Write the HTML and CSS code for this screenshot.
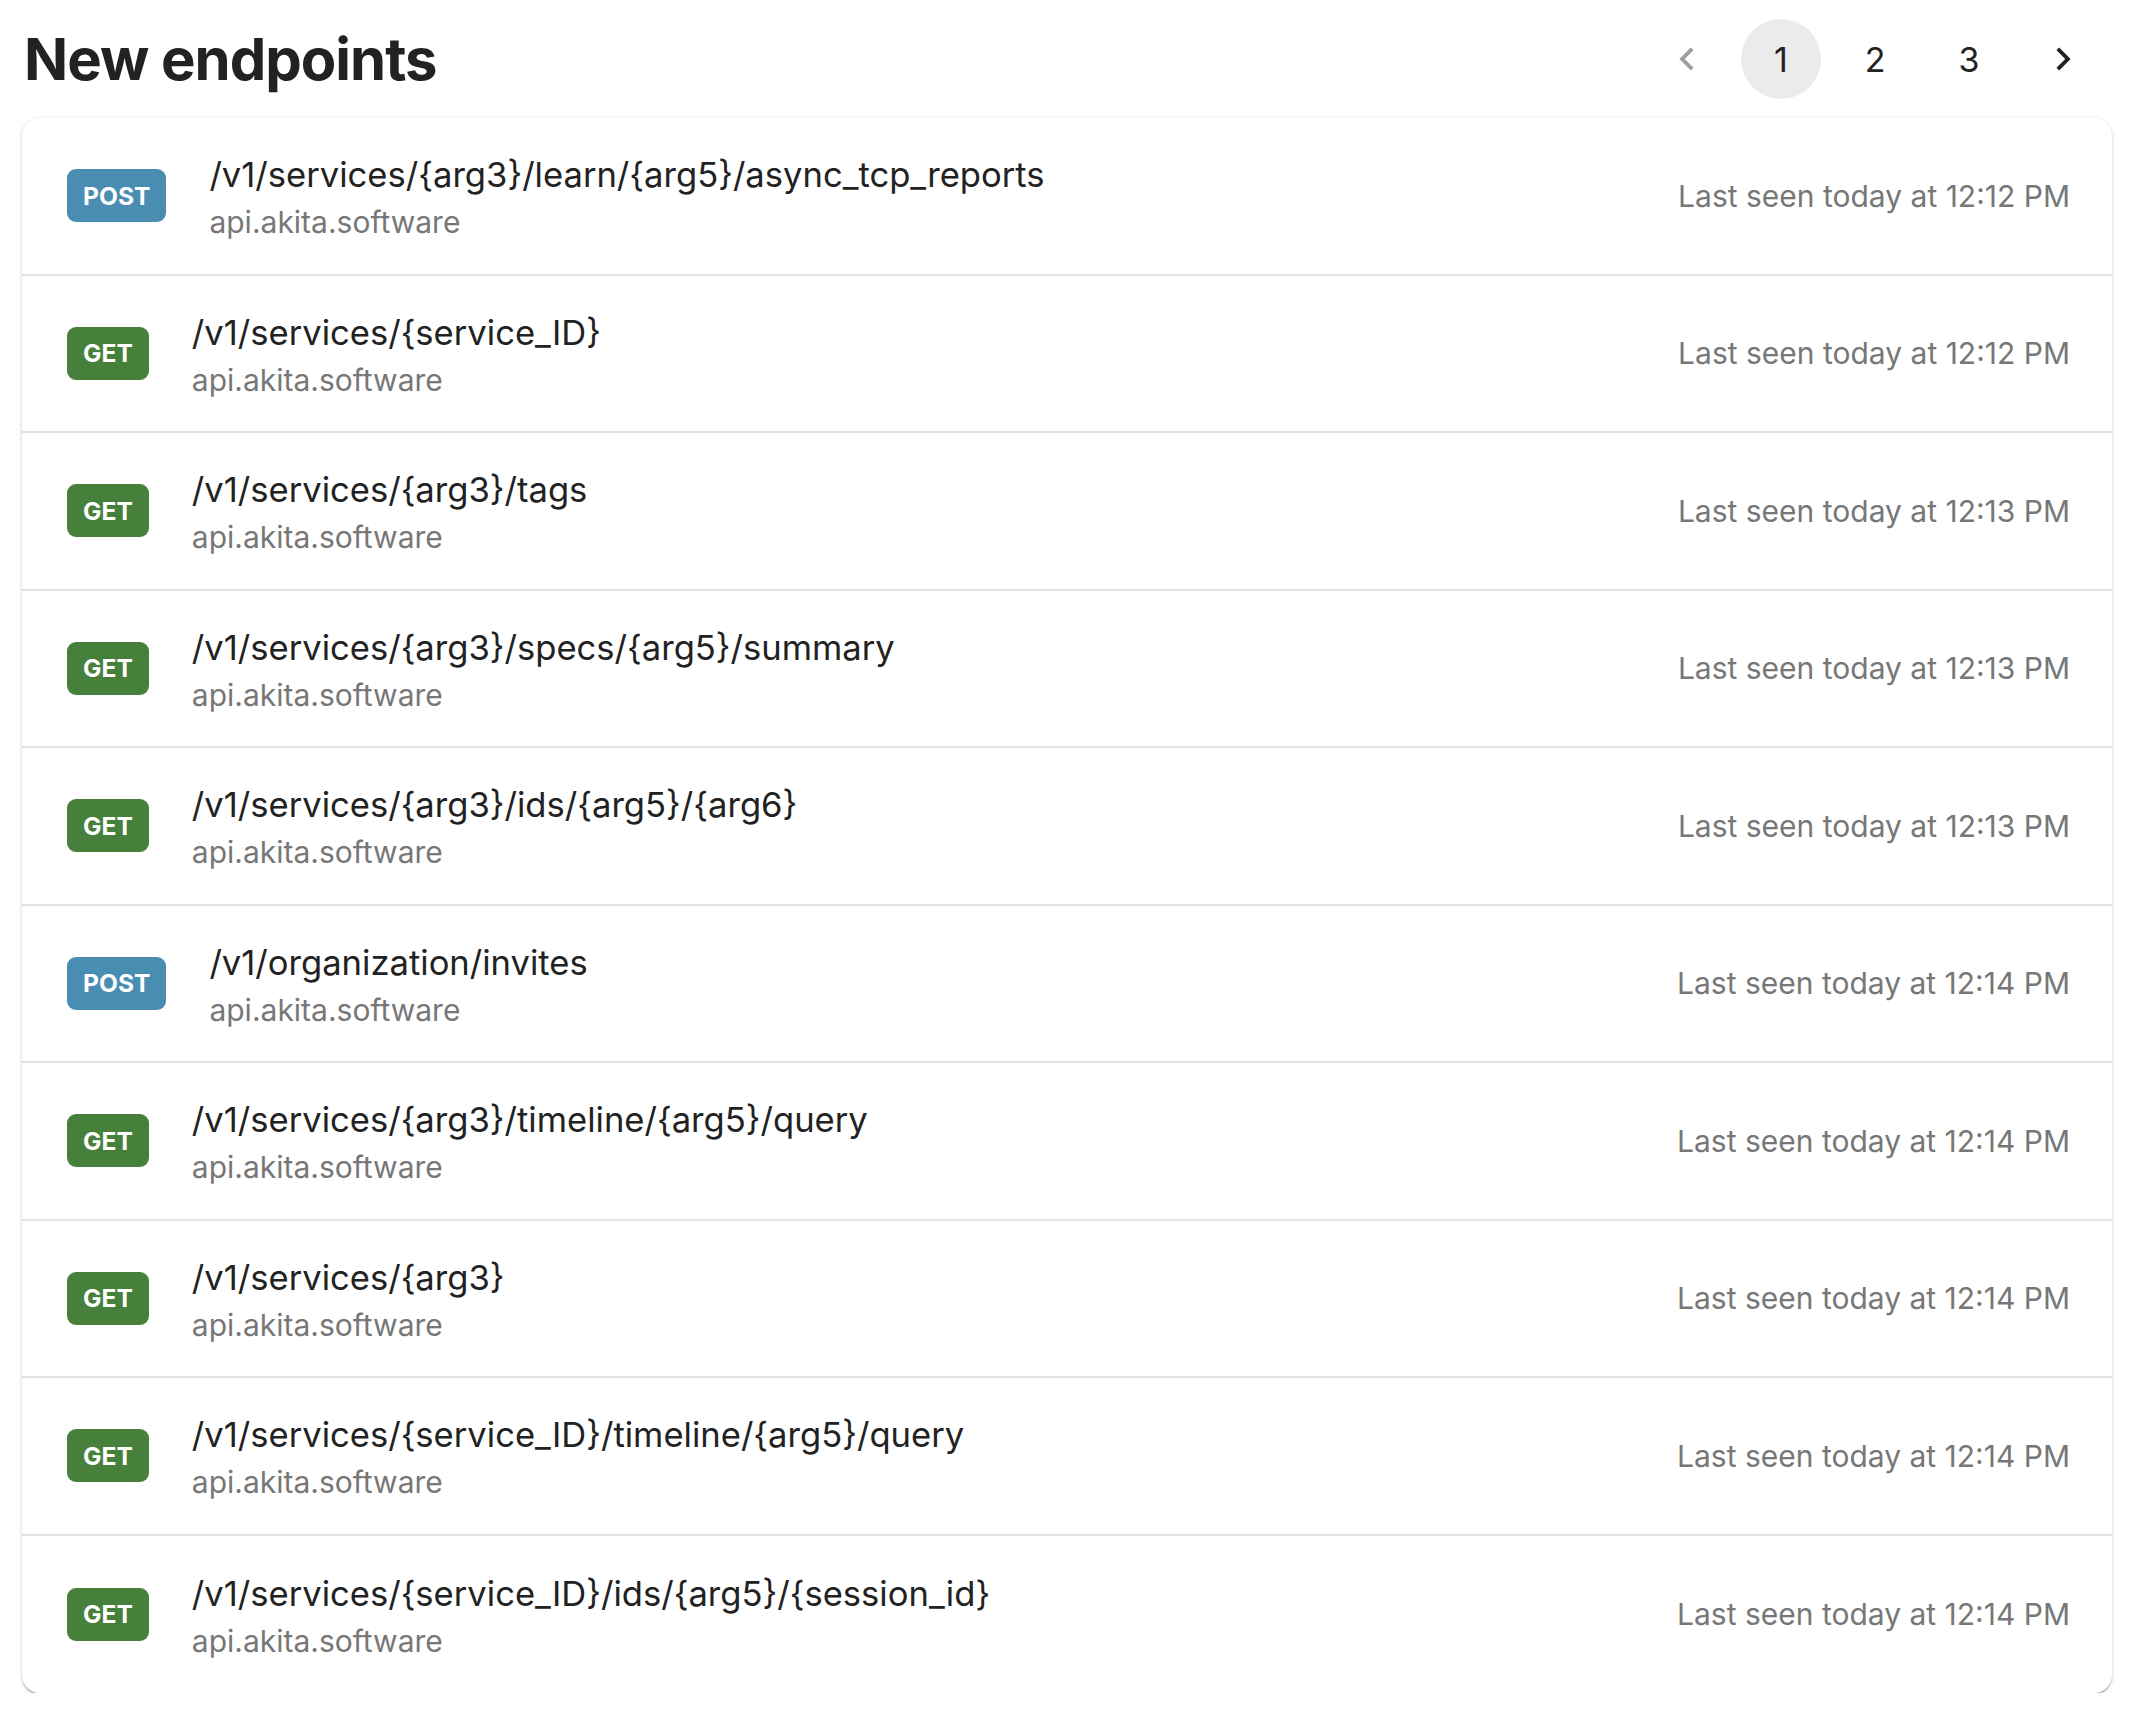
FILE: index.html
```html
<!DOCTYPE html>
<html lang="en">
  <head>
    <meta charset="UTF-8" />
    <meta name="viewport" content="width=device-width, initial-scale=1.0" />
    <title>New endpoints</title>

    <link rel="stylesheet" href="styles.css">
  </head>
  <body>
    <header class="top">
      <h1 class="title">New endpoints</h1>
      <nav class="pager">
        <button class="page-arrow" disabled>
          <svg viewBox="0 0 24 24"><path d="M15.41 7.41 14 6l-6 6 6 6 1.41-1.41L10.83 12z" /></svg>
        </button>
        <button class="page current">1</button>
        <button class="page">2</button>
        <button class="page">3</button>
        <button class="page-arrow">
          <svg viewBox="0 0 24 24"><path d="M10 6 8.59 7.41 13.17 12l-4.58 4.59L10 18l6-6z" /></svg>
        </button>
      </nav>
    </header>

    <section class="card">
      <div class="row">
        <span class="method post">POST</span>
        <div class="info">
          <div class="path">/v1/services/{arg3}/learn/{arg5}/async_tcp_reports</div>
          <div class="host">api.akita.software</div>
        </div>
        <div class="seen">Last seen today at 12:12 PM</div>
      </div>
      <div class="row">
        <span class="method get">GET</span>
        <div class="info">
          <div class="path">/v1/services/{service_ID}</div>
          <div class="host">api.akita.software</div>
        </div>
        <div class="seen">Last seen today at 12:12 PM</div>
      </div>
      <div class="row">
        <span class="method get">GET</span>
        <div class="info">
          <div class="path">/v1/services/{arg3}/tags</div>
          <div class="host">api.akita.software</div>
        </div>
        <div class="seen">Last seen today at 12:13 PM</div>
      </div>
      <div class="row">
        <span class="method get">GET</span>
        <div class="info">
          <div class="path">/v1/services/{arg3}/specs/{arg5}/summary</div>
          <div class="host">api.akita.software</div>
        </div>
        <div class="seen">Last seen today at 12:13 PM</div>
      </div>
      <div class="row">
        <span class="method get">GET</span>
        <div class="info">
          <div class="path">/v1/services/{arg3}/ids/{arg5}/{arg6}</div>
          <div class="host">api.akita.software</div>
        </div>
        <div class="seen">Last seen today at 12:13 PM</div>
      </div>
      <div class="row">
        <span class="method post">POST</span>
        <div class="info">
          <div class="path">/v1/organization/invites</div>
          <div class="host">api.akita.software</div>
        </div>
        <div class="seen">Last seen today at 12:14 PM</div>
      </div>
      <div class="row">
        <span class="method get">GET</span>
        <div class="info">
          <div class="path">/v1/services/{arg3}/timeline/{arg5}/query</div>
          <div class="host">api.akita.software</div>
        </div>
        <div class="seen">Last seen today at 12:14 PM</div>
      </div>
      <div class="row">
        <span class="method get">GET</span>
        <div class="info">
          <div class="path">/v1/services/{arg3}</div>
          <div class="host">api.akita.software</div>
        </div>
        <div class="seen">Last seen today at 12:14 PM</div>
      </div>
      <div class="row">
        <span class="method get">GET</span>
        <div class="info">
          <div class="path">/v1/services/{service_ID}/timeline/{arg5}/query</div>
          <div class="host">api.akita.software</div>
        </div>
        <div class="seen">Last seen today at 12:14 PM</div>
      </div>
      <div class="row">
        <span class="method get">GET</span>
        <div class="info">
          <div class="path">/v1/services/{service_ID}/ids/{arg5}/{session_id}</div>
          <div class="host">api.akita.software</div>
        </div>
        <div class="seen">Last seen today at 12:14 PM</div>
      </div>
    </section>
  </body>
</html>
```

FILE: styles.css
```css
body {
  margin: 0;
  padding: 0 28px 0 22px;
  background: #fff;
  font-family: Inter, "Noto Sans", sans-serif;
  color: #222;
}

.top {
  display: flex;
  justify-content: space-between;
  align-items: center;
  height: 118px;
}

.title {
  margin: 0 0 0 2px;
  font-size: 58px;
  font-weight: 700;
  letter-spacing: -1px;
  color: #222;
}

.pager {
  display: flex;
  align-items: center;
  gap: 14px;
  margin-right: 9px;
}

.pager button {
  width: 80px;
  height: 80px;
  border: none;
  border-radius: 50%;
  background: none;
  padding: 0;
  display: flex;
  align-items: center;
  justify-content: center;
  font-family: inherit;
  font-size: 34px;
  color: #222;
  cursor: pointer;
}

.pager .current {
  background: #ebebeb;
}

.page-arrow svg {
  width: 46px;
  height: 46px;
  fill: #222;
}

.page-arrow:disabled svg {
  fill: #9e9e9e;
}

.card {
  background: #fff;
  border-radius: 18px;
  box-shadow: 0 3px 2px -1px rgba(0, 0, 0, 0.2), 0 1px 2px rgba(0, 0, 0, 0.14),
    0 1px 5px rgba(0, 0, 0, 0.12);
  overflow: hidden;
}

.row {
  box-sizing: border-box;
  height: 157.5px;
  display: flex;
  align-items: center;
  padding: 0 42px 0 45px;
  border-bottom: 2px solid #e3e3e3;
}

.row:last-child {
  border-bottom: none;
}

.method {
  height: 53px;
  padding: 0 16px;
  border-radius: 9px;
  display: flex;
  align-items: center;
  font-size: 24.6px;
  font-weight: 700;
  color: #fff;
  margin-right: 43px;
}

.method.post {
  background: #4a8db3;
}

.method.get {
  background: #46803b;
}

.info {
  display: flex;
  flex-direction: column;
  padding-top: 5px;
}

.path {
  font-size: 34.6px;
  line-height: 48px;
  color: #222;
}

.host {
  font-size: 30px;
  line-height: 48px;
  color: #777;
}

.seen {
  margin-left: auto;
  font-size: 30px;
  color: #777;
}
```
